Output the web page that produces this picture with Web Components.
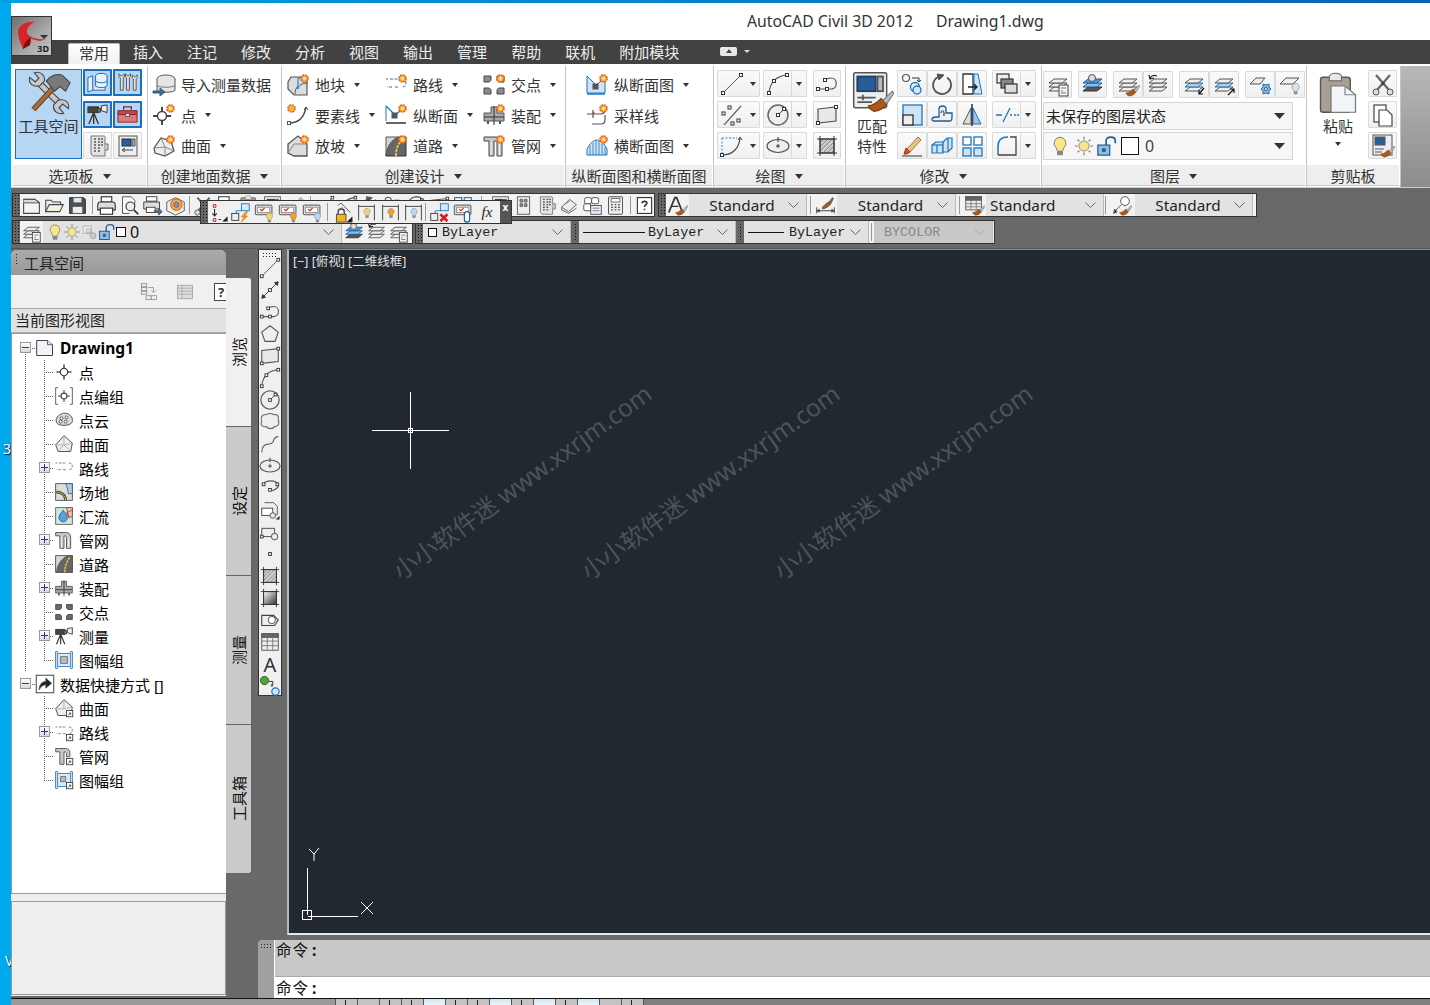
<!DOCTYPE html>
<html lang="zh-CN">
<head>
<meta charset="UTF-8">
<title>AutoCAD Civil 3D 2012</title>
<style>
  html, body { margin: 0; height: 100%; overflow: hidden; }
  html { background: #00a8ee; }
  body { background: linear-gradient(90deg, #009fe3, #0a62b4) top / 100% 3px no-repeat; font: 15px "Noto Sans", "Noto Sans CJK SC", sans-serif; color: #222; }
</style>
</head>
<body>
<cad-wall-label x="3" y="439">3</cad-wall-label>
<cad-wall-label x="5" y="951">V</cad-wall-label>
<cad-desktop>
  <cad-titlebar><span>AutoCAD Civil 3D 2012</span><span>Drawing1.dwg</span></cad-titlebar>
  <cad-tabs>
    <cad-tab active>常用</cad-tab><cad-tab>插入</cad-tab><cad-tab>注记</cad-tab><cad-tab>修改</cad-tab><cad-tab>分析</cad-tab><cad-tab>视图</cad-tab><cad-tab>输出</cad-tab><cad-tab>管理</cad-tab><cad-tab>帮助</cad-tab><cad-tab>联机</cad-tab><cad-tab>附加模块</cad-tab>
  </cad-tabs>
  <cad-ribbon>
    <cad-panel w="135" label="选项板" arrow pad="5px 0 0 2px">
      <cad-grid cols="67px 29px 29px" rows="28px 27px 27px" gap="4px 1px" ml="0">
        <cad-bigtool active icon="toolspace" size="44" style="grid-row:1/4">工具空间</cad-bigtool>
        <cad-tool active icon="dbmap" w="29" h="27"></cad-tool>
        <cad-tool active icon="wrenches" w="29" h="27"></cad-tool>
        <cad-tool active icon="survey" w="29" h="27"></cad-tool>
        <cad-tool active icon="toolbox" w="29" h="27"></cad-tool>
        <cad-tool icon="calc" w="29" h="27"></cad-tool>
        <cad-tool icon="panel" w="29" h="27"></cad-tool>
      </cad-grid>
    </cad-panel>
    <cad-panel w="134" label="创建地面数据" arrow pad="5px 0 0 5px">
      <cad-grid cols="1fr" rows="31px 30px 31px" gap="0">
        <cad-action icon="import">导入测量数据</cad-action>
        <cad-action icon="pointadd" arrow>点</cad-action>
        <cad-action icon="surfaceadd" arrow>曲面</cad-action>
      </cad-grid>
    </cad-panel>
    <cad-panel w="284" label="创建设计" arrow pad="5px 0 0 5px">
      <cad-grid cols="98px 98px 82px" rows="31px 30px 31px" gap="0">
        <cad-action icon="parcel" arrow>地块</cad-action>
        <cad-action icon="alignment" arrow>路线</cad-action>
        <cad-action icon="intersection" arrow>交点</cad-action>
        <cad-action icon="feature" arrow>要素线</cad-action>
        <cad-action icon="profile" arrow>纵断面</cad-action>
        <cad-action icon="assembly" arrow>装配</cad-action>
        <cad-action icon="grading" arrow>放坡</cad-action>
        <cad-action icon="corridor" arrow>道路</cad-action>
        <cad-action icon="pipe" arrow>管网</cad-action>
      </cad-grid>
    </cad-panel>
    <cad-panel w="148" label="纵断面图和横断面图" pad="5px 0 0 20px">
      <cad-grid cols="1fr" rows="31px 30px 31px" gap="0">
        <cad-action icon="profileview" arrow>纵断面图</cad-action>
        <cad-action icon="sample">采样线</cad-action>
        <cad-action icon="sectionview" arrow>横断面图</cad-action>
      </cad-grid>
    </cad-panel>
    <cad-panel w="132" label="绘图" arrow pad="6px 0 0 3px">
      <cad-grid cols="43px 44px 28px" rows="27px 27px 27px" gap="4px 3px">
        <cad-tool icon="line" w="43" h="27" drop="inline"></cad-tool>
        <cad-tool icon="arc" w="44" h="27" drop="split"></cad-tool>
        <cad-tool icon="poly" w="28" h="27" ml="3"></cad-tool>
        <cad-tool icon="points" w="43" h="27" drop="inline"></cad-tool>
        <cad-tool icon="circle" w="44" h="27" drop="split"></cad-tool>
        <cad-tool icon="rect" w="28" h="27" ml="3"></cad-tool>
        <cad-tool icon="dotcurve" w="43" h="27" drop="inline"></cad-tool>
        <cad-tool icon="ellipse" w="44" h="27" drop="split"></cad-tool>
        <cad-tool icon="hatch" w="28" h="27" ml="3"></cad-tool>
      </cad-grid>
    </cad-panel>
    <cad-panel w="196" label="修改" arrow pad="5px 0 0 4px">
      <cad-bigtool plain icon="match" size="44" style="width:44px;height:90px;margin-right:3px">匹配<br>特性</cad-bigtool>
      <cad-grid cols="30px 30px 30px 44px" rows="27px 27px 27px" gap="4px 0" mt="1">
        <cad-tool icon="join" w="30" h="27"></cad-tool>
        <cad-tool icon="rotate" w="30" h="27"></cad-tool>
        <cad-tool icon="stretch" w="30" h="27"></cad-tool>
        <cad-tool icon="overlap" w="44" h="27" drop="split" ml="5"></cad-tool>
        <cad-tool icon="scale" w="30" h="27"></cad-tool>
        <cad-tool icon="offset" w="30" h="27"></cad-tool>
        <cad-tool icon="mirror" w="30" h="27"></cad-tool>
        <cad-tool icon="breakline" w="44" h="27" drop="split" ml="5"></cad-tool>
        <cad-tool icon="erase" w="30" h="27"></cad-tool>
        <cad-tool icon="array3d" w="30" h="27"></cad-tool>
        <cad-tool icon="grid4" w="30" h="27"></cad-tool>
        <cad-tool icon="fillet" w="44" h="27" drop="split" ml="5"></cad-tool>
      </cad-grid>
    </cad-panel>
    <cad-panel w="265" label="图层" arrow pad="7px 0 0 1px" column>
      <cad-row gap="6" h="28">
        <cad-tool icon="layerprops" w="29" h="27"></cad-tool>
        <cad-tool icon="layeriso" w="29" h="27"></cad-tool>
        <cad-row><cad-tool icon="layermatch" w="30" h="27"></cad-tool><cad-tool icon="layerprev" w="30" h="27"></cad-tool></cad-row>
        <cad-row><cad-tool icon="layerdown" w="30" h="27"></cad-tool><cad-tool icon="layerup" w="30" h="27"></cad-tool></cad-row>
        <cad-row><cad-tool icon="layerfreeze" w="30" h="27"></cad-tool><cad-tool icon="layerbulb" w="30" h="27"></cad-tool></cad-row>
      </cad-row>
      <cad-combo w="250" h="28" mode="ribbon" mt="3"><span style="padding:0 0 2px 2px">未保存的图层状态</span></cad-combo>
      <cad-combo w="250" h="28" mode="ribbon" mt="2">
        <cad-icon name="bulbY" size="22" box="24" style="margin-left:4px"></cad-icon>
        <cad-icon name="sun" size="22" box="24"></cad-icon>
        <cad-icon name="lockopen" size="22" box="22"></cad-icon>
        <cad-swatch size="18" style="margin:0 6px 0 3px"></cad-swatch><span style="font-size:16px;color:#444">0</span>
      </cad-combo>
    </cad-panel>
    <cad-panel w="94" label="剪贴板" pad="5px 0 0 6px">
      <cad-bigtool plain icon="paste" size="42" style="width:50px;height:90px;margin-right:5px">粘贴<cad-caret></cad-caret></cad-bigtool>
      <cad-grid cols="29px" rows="27px 27px 27px" gap="4px" mt="1">
        <cad-tool icon="cut" w="29" h="27"></cad-tool>
        <cad-tool icon="copy" w="29" h="27"></cad-tool>
        <cad-tool icon="matchsmall" w="29" h="27"></cad-tool>
      </cad-grid>
    </cad-panel>
  </cad-ribbon>

  <cad-toolbars>
    <cad-row gap="3">
      <cad-toolbar w="643">
        <cad-icon name="new" box="23"></cad-icon><cad-icon name="open" box="23"></cad-icon><cad-icon name="save" box="23"></cad-icon><cad-sep></cad-sep>
        <cad-icon name="print" box="23"></cad-icon><cad-icon name="preview" box="23"></cad-icon><cad-icon name="plot" box="23"></cad-icon><cad-icon name="publish" box="23"></cad-icon><cad-sep w="5"></cad-sep>
        <cad-icon name="cut" box="23"></cad-icon><cad-icon name="copy" box="23"></cad-icon><cad-icon name="paste" box="23"></cad-icon><cad-icon name="panel" box="23"></cad-icon><cad-icon name="erase" box="23"></cad-icon><cad-sep></cad-sep>
        <cad-icon name="line" box="23"></cad-icon><cad-icon name="arc" box="23"></cad-icon><cad-icon name="rotate" box="23"></cad-icon><cad-icon name="join" box="23"></cad-icon><cad-icon name="circle" box="23"></cad-icon><cad-icon name="rect" box="23"></cad-icon><cad-icon name="grid4" box="23"></cad-icon><cad-sep w="15"></cad-sep>
        <cad-icon name="panel" box="23"></cad-icon><cad-icon name="palette" box="23"></cad-icon><cad-icon name="calc" box="23"></cad-icon><cad-icon name="stack" box="23"></cad-icon><cad-icon name="blocks" box="23"></cad-icon><cad-icon name="calc2" box="23"></cad-icon><cad-sep w="7"></cad-sep>
        <cad-icon name="help" box="21" size="19"></cad-icon>
      </cad-toolbar>
      <cad-toolbar w="599">
        <cad-icon name="textstyle" box="23"></cad-icon>
        <cad-combo w="118" h="22" center>Standard</cad-combo><cad-sep w="7"></cad-sep>
        <cad-icon name="dimstyle" box="23"></cad-icon>
        <cad-combo w="119" h="22" center>Standard</cad-combo><cad-sep w="7"></cad-sep>
        <cad-icon name="tablestyle" box="23"></cad-icon>
        <cad-combo w="118" h="22"><span style="padding-left:4px">Standard</span></cad-combo><cad-sep w="3"></cad-sep>
        <cad-icon name="mleader" box="28" size="21"></cad-icon>
        <cad-combo w="118" h="22" center>Standard</cad-combo>
      </cad-toolbar>
    </cad-row>
    <cad-row gap="2">
      <cad-toolbar w="401">
        <cad-icon name="layerprops" box="23"></cad-icon>
        <cad-combo w="299" h="22">
          <cad-icon name="bulbY" size="18" box="16" style="margin-left:4px"></cad-icon><cad-icon name="sun" size="18" box="18"></cad-icon><cad-icon name="plotoff" size="18" box="18"></cad-icon><cad-icon name="lockopen" size="18" box="16"></cad-icon>
          <cad-swatch size="10" style="margin:0 4px 0 1px"></cad-swatch><span style="color:#111;font-size:16px">0</span>
        </cad-combo>
        <cad-icon name="layeriso" box="22" size="21" style="margin-left:1px"></cad-icon><cad-icon name="layerprev" box="22" size="21"></cad-icon><cad-icon name="layerprops" box="22" size="21"></cad-icon>
      </cad-toolbar>
      <cad-toolbar w="580">
        <cad-combo w="148" h="22" mono><cad-swatch size="9" style="margin:0 5px 0 5px"></cad-swatch>ByLayer</cad-combo><cad-sep grip></cad-sep>
        <cad-combo w="157" h="22" mono><cad-rule w="62"></cad-rule><span style="margin-left:3px">ByLayer</span></cad-combo><cad-sep grip></cad-sep>
        <cad-combo w="125" h="22" mono><cad-rule w="36"></cad-rule><span style="margin-left:5px">ByLayer</span></cad-combo><cad-sep w="5"></cad-sep>
        <cad-combo w="119" h="22" mono disabled><span style="padding-left:10px">BYCOLOR</span></cad-combo>
      </cad-toolbar>
    </cad-row>
  </cad-toolbars>

  <cad-workspace>
    <cad-palette slot="palette">
      <cad-tree-item level="0" icon="doc" open bold>Drawing1</cad-tree-item>
      <cad-tree-item level="1" icon="target" trunk>点</cad-tree-item>
      <cad-tree-item level="1" icon="targetgroup" trunk>点编组</cad-tree-item>
      <cad-tree-item level="1" icon="cloud" trunk>点云</cad-tree-item>
      <cad-tree-item level="1" icon="surface" trunk>曲面</cad-tree-item>
      <cad-tree-item level="1" icon="alignTree" trunk plus>路线</cad-tree-item>
      <cad-tree-item level="1" icon="siteTree" trunk>场地</cad-tree-item>
      <cad-tree-item level="1" icon="catch" trunk>汇流</cad-tree-item>
      <cad-tree-item level="1" icon="pipeTree" trunk plus>管网</cad-tree-item>
      <cad-tree-item level="1" icon="road" trunk>道路</cad-tree-item>
      <cad-tree-item level="1" icon="assemblyTree" trunk plus>装配</cad-tree-item>
      <cad-tree-item level="1" icon="cross" trunk>交点</cad-tree-item>
      <cad-tree-item level="1" icon="survey" trunk plus>测量</cad-tree-item>
      <cad-tree-item level="1" icon="sheet" trunk last>图幅组</cad-tree-item>
      <cad-tree-item level="0" icon="shortcut" open>数据快捷方式 []</cad-tree-item>
      <cad-tree-item level="1" icon="surfaceS">曲面</cad-tree-item>
      <cad-tree-item level="1" icon="alignS" plus>路线</cad-tree-item>
      <cad-tree-item level="1" icon="pipeS">管网</cad-tree-item>
      <cad-tree-item level="1" icon="sheetS" last>图幅组</cad-tree-item>
    </cad-palette>
    <cad-sidetabs slot="palette">
      <cad-sidetab active>浏览</cad-sidetab><cad-sidetab>设定</cad-sidetab><cad-sidetab>测量</cad-sidetab><cad-sidetab last>工具箱</cad-sidetab>
    </cad-sidetabs>
    <cad-drawbar slot="drawbar">
      <cad-icon name="line" box="22"></cad-icon><cad-icon name="xline" box="22"></cad-icon><cad-icon name="poly" box="22"></cad-icon><cad-icon name="pentagon" box="22"></cad-icon><cad-icon name="rect" box="22"></cad-icon><cad-icon name="arc" box="22"></cad-icon><cad-icon name="circle" box="22"></cad-icon><cad-icon name="revcloud" box="22"></cad-icon><cad-icon name="spline" box="22"></cad-icon><cad-icon name="ellipse" box="22"></cad-icon><cad-icon name="earc" box="22"></cad-icon><cad-icon name="insert" box="22"></cad-icon><cad-icon name="block" box="22"></cad-icon><cad-icon name="dot" box="22"></cad-icon><cad-icon name="hatch" box="22"></cad-icon><cad-icon name="gradient" box="22"></cad-icon><cad-icon name="region" box="22"></cad-icon><cad-icon name="table" box="22"></cad-icon><cad-text-icon>A</cad-text-icon><cad-icon name="addsel" box="22"></cad-icon>
    </cad-drawbar>
    <cad-viewport slot="viewport" label="[−] [俯视] [二维线框]">
      <cad-watermark x="115" y="307">小小软件迷 www.xxrjm.com</cad-watermark>
      <cad-watermark x="303" y="307">小小软件迷 www.xxrjm.com</cad-watermark>
      <cad-watermark x="496" y="307">小小软件迷 www.xxrjm.com</cad-watermark>
    </cad-viewport>
    <cad-command slot="command"></cad-command>
  </cad-workspace>
  <cad-statusbar></cad-statusbar>
</cad-desktop>

<script>
  // small svg bits reused by the icons
  const n = (x, y, c = '#333') => `<rect x="${x - 1.5}" y="${y - 1.5}" width="3" height="3" fill="#fff" stroke="${c}"/>`;
  const star = `<circle cx="18.5" cy="5.5" r="3.6" fill="#fbb03b" stroke="#e8581c" stroke-width="1.4" stroke-dasharray="2 .8"/><circle cx="18.5" cy="5.5" r="1.2" fill="#fff2c8" stroke="none"/>`;
  const brush = (x = 0, y = 0) => `<g transform="translate(${x} ${y})"><path d="M12 22c-2-1-3-2-3-3 3 0 5-2 7-4l3 3c-1 2-4 4-7 4z" fill="#a9591b" stroke="#7a3e10" stroke-width=".6"/><path d="M17 16l5-5 1 1-4 6z" fill="#bbb" stroke="#777" stroke-width=".6"/></g>`;
  const bulb = (f, s = '#777') => `<path d="M12 2.5a6.5 6.5 0 0 0-4.5 11.2c1 1 1.5 2.3 1.5 4h6c0-1.7.5-3 1.5-4A6.5 6.5 0 0 0 12 2.5z" fill="${f}" stroke="${s}"/><path d="M9.5 18.5h5v3h-5z" fill="#999" stroke="#666"/>`;
  const smallbulb = (f, x = 15, y = 12) => `<g transform="translate(${x} ${y}) scale(.55)">${bulb(f)}</g>`;
  const sheetcheck = `<rect x="1.5" y="3.5" width="19" height="11" rx="1" fill="#ddd" stroke="#444"/><rect x="4" y="6" width="14" height="6" fill="#fff" stroke="#888"/><path d="M7 8l2 2 3-3" stroke="#c00" stroke-width="1.2"/>`;
  const layers = (c = '#ddd', s = '#555') => `<path d="M3 18l5-4h13l-5 4z" fill="${c}" stroke="${s}"/><path d="M3 14l5-4h13l-5 4z" fill="${c}" stroke="${s}"/><path d="M3 10l5-4h13l-5 4z" fill="${c}" stroke="${s}"/>`;
  const layersBlue = `<path d="M3 18l5-4h13l-5 4z" fill="#eee" stroke="#555"/><path d="M3 14l5-4h13l-5 4z" fill="#a8cdee" stroke="#1c75bc"/><path d="M3 10l5-4h13l-5 4z" fill="#eee" stroke="#555"/>`;
  const short = `<rect x="15" y="15" width="7.5" height="7.5" fill="#fff" stroke="#333"/><path d="M17 21l3-3m-2 0h2v2" stroke="#333"/>`;
  const pipeShape = `<path d="M2 3h12c4 0 6 2 6 6v13h-5V9c0-1-1-2-2-2h-1v15H7V7H2z" fill="#c8c8c8" stroke="#444"/><path d="M9 8v13M17.500 10v11" stroke="#f4f4f4"/>`;
  const alignShape = `<path d="M2 6h2M6 6h8M18 6c3 0 4 2 4 4s-1 4-4 4M14 14h-3M8 14H3" stroke="#3a6d9e" stroke-dasharray="3 1.4"/>`;
  const quads = (f) => `<g fill="${f}" stroke="#444"><path d="M2 3h7v3c0 2-1 3-3 3H2z"/><path d="M22 3h-7v3c0 2 1 3 3 3h4z"/><path d="M2 21h7v-3c0-2-1-3-3-3H2z"/><path d="M22 21h-7v-3c0-2 1-3 3-3h4z"/></g>`;

  const ICONS = {
    toolspace: `<path d="M5 5l14 14" stroke="#444" stroke-width="3.6"/><path d="M5 5l14 14" stroke="#c8c8c8" stroke-width="2.4"/><g fill="#c8c8c8" stroke="#444" stroke-width=".6"><path d="M1.500 3.500L4.500 6l2-2L4 1c3-1 6 1 5.500 4.500L7 8C3.500 9 0.500 7 1.500 3.500z"/><path d="M22.500 20.500L19.500 18l-2 2L20 23c-3 1-6-1-5.500-4.500L17 16c3.500-1 6.500 1 5.500 4.500z"/></g><path d="M3.500 21L15 8.500" stroke="#5c3a20" stroke-width="3"/><path d="M3.500 21L15 8.500" stroke="#a86a3a" stroke-width="2"/><path d="M10.500 5.500c2-3 6-4.500 9-3l4 4-2.500 4.500-3-2.500-3 2.500z" fill="#7a7a7a" stroke="#444" stroke-width=".6"/>`,
    dbmap: `<path d="M2 7l5-2v15l-5 2zM7 20h13V8" fill="#e4eff9" stroke="#2266a8"/><ellipse cx="16" cy="5" rx="6" ry="2.500" fill="#e8f2fb" stroke="#1c65a8"/><path d="M10 5v10c0 3 12 3 12 0V5M10 10c0 3 12 3 12 0" stroke="#1c65a8" fill="#e8f2fb"/>`,
    wrenches: `<g fill="#e3e3e3" stroke="#555"><path d="M3 3v3l1.500 1v13h3V7L9 6V3L7 5H5z"/><path d="M10 3v3l1 1v13h3V7l1-1V3l-2 2h-1z"/><path d="M17 4v3l1 1v12h3V8l1-1V4l-2 2h-1z"/></g>`,
    survey: `<g stroke="#333"><rect x="2" y="4" width="11" height="6" fill="#444"/><rect x="12" y="5.500" width="3" height="4" fill="#777"/><path d="M16 3l6-1v8l-6-2z" fill="#eee"/><path d="M8 10L3 22M8 10v12M8 10l5 12" stroke-width="1.400"/></g>`,
    toolbox: `<path d="M8 7V4h8v3" stroke="#7a2c2c" stroke-width="1.400"/><path d="M2 8h20v4H2z" fill="#c7444a" stroke="#7a2c2c"/><path d="M2 12h20v8H2z" fill="#e2777a" stroke="#7a2c2c"/><rect x="10" y="11" width="4" height="3" fill="#eee" stroke="#555"/>`,
    calc: `<path d="M5 2h13c1 0 1 1 1 1v19H7l-2-2z" fill="#e3e3e3" stroke="#777"/><path d="M8 5h2M12 5h2M15 5h2M8 8h2M12 8h2M15 8h2M8 11h2M12 11h2M15 11h2M8 14h2M12 14h2M8 17h2M12 17h2" stroke="#555" stroke-width="1.500"/><path d="M19 10h3v6h-3" fill="#ccc" stroke="#777"/>`,
    panel: `<rect x="3" y="2" width="18" height="20" fill="#eee" stroke="#555"/><rect x="6" y="5" width="9" height="7" fill="#2a5d96" stroke="#234"/><path d="M16 5h3v7h-3z" fill="#aaa"/><path d="M7 16h10" stroke="#444"/><path d="M9 14l-3 2 3 2" stroke="#444"/>`,
    import: `<ellipse cx="14" cy="6" rx="9" ry="4" fill="#e8e8e8" stroke="#555"/><path d="M5 6v11c0 3 18 3 18 0V6" fill="#e6e6e6" stroke="#555"/><path d="M5 12c0 3 18 3 18 0" stroke="#777"/><path d="M1 18h7v-3l5 4-5 4v-3H1z" fill="#1c75bc"/>`,
    pointadd: `<circle cx="10" cy="13" r="4.500" stroke="#444" stroke-width="1.500"/><path d="M10 4v5M10 17v5M1 13h5M14 13h5" stroke="#444" stroke-width="2"/>${star}`,
    surfaceadd: `<path d="M2 14L9 4l10 3 3 10-9 5-10-3z" fill="#eee" stroke="#555" stroke-width="1.300"/><path d="M2 14l11-1 9 4M13 13l-4-9M13 13v9" stroke="#888"/>${star}`,
    parcel: `<path d="M2 9l3-5h16v18H8l-6-6z" fill="#ddd" stroke="#555" stroke-width="1.200"/><path d="M9 21c0-7 4-11 12-11" stroke="#555" fill="none"/><path d="M12 5h9v5c-5 0-8 2-9 6z" fill="#cfe0ef" stroke="#2a6aa8"/>${star}`,
    alignment: `${alignShape}${star}`,
    feature: `<path d="M3 20c10 0 15-5 17-16" stroke="#444" stroke-width="1.400"/>${n(3, 20, '#555')}<path d="M20 4l-2 3M20 4l2 3" stroke="#444"/><circle cx="5.500" cy="5.500" r="3.600" fill="#fbb03b" stroke="#e8581c" stroke-width="1.400" stroke-dasharray="2 .8"/>`,
    profile: `<path d="M2 3l9 9 9-7" stroke="#1c75bc" stroke-width="1.300"/><path d="M2 20h20" stroke="#333" stroke-width="1.500"/><rect x="8" y="10" width="5" height="5" fill="#555"/><path d="M2 3v15" stroke="#1c75bc"/>${star}`,
    grading: `<path d="M2 10L12 2l9 8v12H8l-6-3z" fill="#ddd" stroke="#555" stroke-width="1.300"/><path d="M2 19l6-9h13" stroke="#888"/>${star}`,
    corridor: `<path d="M2 22C3 10 8 4 16 3l6 0v19z" fill="#666" stroke="#333"/><path d="M2 22V3h13C8 5 3 12 2 22z" fill="#cfd8c8" stroke="#555"/><path d="M12 22c0-6 1-11 6-16" stroke="#f8d12e" stroke-width="1.800" stroke-dasharray="3 1"/>${star}`,
    intersection: `${quads('#8c8c8c')}${star}`,
    assembly: `<path d="M9 4h6v6h7v8H2v-8h7z" fill="#aaa" stroke="#555"/><path d="M12 3v19M2 14h20" stroke="#333"/><path d="M6 18v3M18 18v3" stroke="#555" stroke-width="2"/>${star}`,
    pipe: `${pipeShape}${star}`,
    profileview: `<path d="M2 20V3l9 9 9-7v15z" fill="#cfe4f6" stroke="#1c75bc"/><rect x="8" y="11" width="5" height="5" fill="#555"/><path d="M2 21h18" stroke="#1c75bc" stroke-width="1.500"/>${star}`,
    sample: `<path d="M2 11h6M8 7v8M8 11h7c4 0 5-2 5-4M20 12v5c0 3-2 4-4 4H7" stroke="#555" stroke-width="1.200"/><path d="M7 10h3" stroke="#c33"/>${star}`,
    sectionview: `<path d="M2 21v-6c3-6 7-9 10-9s7 3 10 9v6z" fill="#d4e5f4" stroke="#1c75bc"/><path d="M5 21V12M8 21V9M11 21V7M14 21V7M17 21V10M20 21V13" stroke="#1c75bc" stroke-width=".8"/>${star}`,
    line: `<path d="M3 21L21 3" stroke="#555"/>${n(3, 21)}${n(21, 3)}`,
    xline: `<path d="M5 19L19 5M3 21l4-1-3-3zM21 3l-4 1 3 3z" stroke="#333" fill="#333"/>${n(12, 12)}`,
    arc: `<path d="M3 21c1-10 7-17 18-18" stroke="#555" stroke-width="1.200"/>${n(3, 21)}${n(8, 9)}${n(21, 3)}`,
    poly: `<path d="M3 17h13c7 0 7-11 0-11-4 0-6 2-6 2" stroke="#555" stroke-width="1.200"/>${n(3, 17)}${n(12, 17)}${n(10, 8)}`,
    points: `<path d="M4 22L21 3" stroke="#666" stroke-width="1.200"/><g fill="#fff" stroke="#333"><rect x="2" y="9" width="3" height="3"/><rect x="8" y="3" width="3" height="3"/><rect x="17" y="16" width="3" height="3"/><rect x="11" y="19" width="3" height="3"/></g>`,
    circle: `<circle cx="12" cy="12" r="10" fill="#eee" stroke="#666" stroke-width="1.500"/><path d="M12 12l6-6" stroke="#444"/>${n(12, 12)}${n(18, 6)}`,
    rect: `<path d="M3 6l18-2v14L3 20z" fill="#e8e8e8" stroke="#555" stroke-width="1.200"/>${n(3, 20)}${n(21, 4)}`,
    dotcurve: `<path d="M2 4h15" stroke="#2a8ad8" stroke-dasharray="2 1.500"/><path d="M2 4v17" stroke="#2a8ad8" stroke-dasharray="2 1.500"/><path d="M2 21c11 0 17-7 18-17" stroke="#444" stroke-width="1.200"/><path d="M20 3l-2 3M20 3l2 3" stroke="#444"/>${n(2, 21)}`,
    ellipse: `<ellipse cx="12" cy="12" rx="11" ry="6.500" fill="#eee" stroke="#555" stroke-width="1.200"/><path d="M12 10v4M10 12h4M12 3v5" stroke="#333"/>`,
    earc: `<path d="M4 8c4-5 14-5 17 0 1 3-3 6-7 7" stroke="#555" stroke-width="1.200"/>${n(5, 8)}${n(12, 14)}${n(20, 8)}`,
    hatch: `<rect x="5" y="5" width="14" height="14" fill="#ccc" stroke="#333"/><path d="M5 9l4-4M5 13l8-8M5 17l12-12M8 19l11-11M12 19l7-7M16 19l3-3" stroke="#777" stroke-width=".8"/><path d="M2 5h20M2 19h20M5 2v20M19 2v20" stroke="#333"/>`,
    gradient: `<defs><linearGradient id="g1" x2="1" y2="1"><stop offset="0" stop-color="#fff"/><stop offset="1" stop-color="#333"/></linearGradient></defs><rect x="5" y="5" width="14" height="14" fill="url(#g1)" stroke="#333"/><path d="M2 5h20M2 19h20M5 2v20M19 2v20" stroke="#333"/>`,
    region: `<path d="M3 7h13l5 5-4 6H3z" fill="#eee" stroke="#444" stroke-width="1.200"/><circle cx="14" cy="12" r="4" fill="#fff" stroke="#444"/>`,
    pentagon: `<path d="M12 3l9 7-3.500 10h-11L3 10z" fill="#eee" stroke="#555" stroke-width="1.200"/>`,
    revcloud: `<path d="M8 4c3-2 5-2 8 0 4-1 6 2 5 6 2 3 0 7-4 7-2 3-7 3-9 0-5 1-7-3-5-6C1 7 4 3 8 4z" fill="#eee" stroke="#666" stroke-width="1.200"/>`,
    spline: `<path d="M3 21c0-8 5-9 8-9s4-1 5-4 3-4 5-4" stroke="#555" stroke-width="1.200"/>`,
    insert: `<path d="M6 4h10l4 4v9H4" fill="#eee" stroke="#555"/><rect x="3" y="10" width="12" height="8" fill="#fff" stroke="#444"/><circle cx="15" cy="18" r="3" fill="#eee" stroke="#444"/><path d="M19 22l3-3v3z" fill="#111"/>`,
    block: `<path d="M3 8h14v9H3z" fill="#eee" stroke="#444"/>${n(3, 17)}<circle cx="17" cy="17" r="3.500" fill="#eee" stroke="#444"/>`,
    dot: `<rect x="10.500" y="10.500" width="3" height="3" fill="#fff" stroke="#222"/>`,
    table: `<rect x="3" y="3" width="18" height="18" fill="#eee" stroke="#555"/><path d="M3 3h18v4H3z" fill="#666"/><path d="M3 11h18M3 16h18M9 7v14M15 7v14" stroke="#777"/>`,
    addsel: `<circle cx="6" cy="6" r="4.500" fill="#5a9e3a" stroke="#2c6a1e"/><circle cx="18" cy="18" r="4" fill="#cfe6fa" stroke="#1c75bc" stroke-width="1.300"/><path d="M11 7h4v4M13 10l2 2-2 0" stroke="#222"/>`,
    match: `<rect x="2" y="1" width="18" height="19" rx="1" fill="#eceff2" stroke="#555" stroke-width=".8"/><rect x="4" y="3" width="10" height="8" fill="#2a5d96" stroke="#1e3f68"/><rect x="15" y="3" width="3" height="8" fill="#bbb"/><path d="M4 14.500h10M4 17h8M7 13v3" stroke="#555"/>${brush(1, 0)}`,
    join: `<circle cx="6" cy="6" r="3.500" stroke="#555" stroke-width="1.200"/><circle cx="15" cy="15" r="4.500" stroke="#1c75bc" stroke-width="1.300"/><circle cx="17" cy="18" r="4" fill="#d4e6f7" stroke="#1c75bc" stroke-width="1.300"/><path d="M12 6h7v4M17 8l2 2 2-2" stroke="#333"/>`,
    rotate: `<path d="M8 5a9 9 0 1 0 9 .5" stroke="#555" stroke-width="1.800"/><path d="M7 2l7 1-5 5z" fill="#555"/>`,
    stretch: `<path d="M3 2h10v20H3z" fill="#fff" stroke="#333" stroke-width="1.300"/><path d="M14 2h4l4 20h-8z" fill="#cde3f6" stroke="#1c75bc"/><path d="M8 15h9M14 12l3 3-3 3" stroke="#222" stroke-width="1.300"/>`,
    overlap: `<rect x="2" y="2" width="12" height="9" fill="#eee" stroke="#333" stroke-width="1.200"/><rect x="6" y="7" width="12" height="9" fill="#888" stroke="#333" stroke-width="1.200"/><rect x="10" y="12" width="12" height="9" fill="#ddd" stroke="#333" stroke-width="1.200"/>`,
    scale: `<rect x="3" y="2" width="19" height="20" fill="#cfe4f6" stroke="#1c75bc" stroke-width="1.300"/><rect x="3" y="12" width="10" height="10" fill="#eee" stroke="#333" stroke-width="1.300"/>`,
    offset: `<path d="M6 14h3V6c0-4 7-4 7 0v4h6v4c0 2 0 4-2 4H4c-3 0-3-4 2-4z" fill="#eee" stroke="#1c5d98" stroke-width="1.300"/><path d="M11 10c0-3 3-3 3 0v3" stroke="#222"/>`,
    mirror: `<path d="M11 5L3 21h8z" fill="#ddd" stroke="#555"/><path d="M13 5l8 16h-8z" fill="#9cc6ea" stroke="#1c75bc"/><path d="M12 1v22" stroke="#222" stroke-width="1.400"/>`,
    breakline: `<path d="M1 12h6M8 19l7-14" stroke="#1c75bc" stroke-width="1.300"/><path d="M15 12h2M19 12h2M22 12h2" stroke="#1c75bc" stroke-width="1.300"/>`,
    erase: `<path d="M7 15L18 3l3 3-11 12z" fill="#e8c48a" stroke="#a07a40"/><path d="M6 14l4 4-3 2H4z" fill="#d8542a" stroke="#a0301a"/><path d="M2 22h20" stroke="#333"/>`,
    array3d: `<g fill="#cfe4f6" stroke="#1c75bc" stroke-width="1.200"><path d="M2 11l4-3h7v11H2z"/><path d="M13 8l4-4h5v10l-4 4h-5z"/><path d="M2 11h11"/><path d="M7 11v8"/><path d="M18 4v14"/></g>`,
    grid4: `<g fill="#cfe4f6" stroke="#1c75bc" stroke-width="1.300"><rect x="3" y="3" width="8" height="8" fill="#fff"/><rect x="14" y="3" width="8" height="8" fill="#fff"/><rect x="3" y="14" width="8" height="8"/><rect x="14" y="14" width="8" height="8"/></g>`,
    fillet: `<path d="M3 21V12C3 6 7 3 13 3" stroke="#1c75bc" stroke-width="1.500"/><path d="M15 3h6v18H3" stroke="#444" stroke-width="1.300"/>`,
    layerprops: `${layers('#eee')}<rect x="13" y="12" width="9" height="11" fill="#f4f4f4" stroke="#444"/><path d="M15 15h5M15 18h2M15 20h5" stroke="#777"/>`,
    layeriso: `<path d="M2 18l5-4h14l-5 4z" fill="#555" stroke="#333"/><path d="M2 14l5-4h14l-5 4z" fill="#8cbde8" stroke="#1c5d98"/><path d="M2 10l5-4h14l-5 4z" fill="#4c9ade" stroke="#1c5d98"/><circle cx="11" cy="5" r="3.500" fill="#ddd" stroke="#555"/>`,
    layermatch: `${layers('#eee')}${brush(1, 1)}`,
    layerprev: `${layers('#eee')}<path d="M4 5c2-3 5-3 7-2M3 2l1 4 4-1" stroke="#222" stroke-width="1.200"/>`,
    layerdown: `${layersBlue}<path d="M22 15l-5 6M17 17v4h4" stroke="#111" stroke-width="1.200"/>`,
    layerup: `${layersBlue}<path d="M16 22l6-6M18 16h4v4" stroke="#111" stroke-width="1.200"/>`,
    layerfreeze: `<path d="M2 11L8 5h9l-5 6z" fill="#eee" stroke="#555"/><path d="M15 11l3 1 3-1 0 3 2 2-2 2v3l-3-1-3 1v-3l-2-2 2-2z" fill="#7cb7ec" stroke="#1c75bc"/><circle cx="18" cy="16" r="1.500" fill="#fff"/>`,
    layerbulb: `<path d="M2 11L8 5h13l-6 6z" fill="#eee" stroke="#555"/>${smallbulb('#cfe4f6', 11, 9)}`,
    bulbY: bulb('#fbe58a'),
    sun: `<circle cx="12" cy="12" r="5.500" fill="#fbe58a" stroke="#888"/><path d="M12 2v3M12 19v3M2 12h3M19 12h3M5 5l2 2M17 17l2 2M19 5l-2 2M7 17l-2 2" stroke="#777" stroke-width="1.300"/>`,
    plotoff: `<rect x="3" y="4" width="11" height="10" fill="#eee" stroke="#aaa"/><rect x="7" y="8" width="6" height="5" fill="#ddd" stroke="#aaa"/><circle cx="16" cy="17" r="4" fill="#ccc" stroke="#999"/>`,
    lockopen: `<rect x="2" y="11" width="13" height="11" fill="#8cbfe8" stroke="#1c5d98" stroke-width="1.300"/><path d="M7 15h3v3H7z" fill="#1c5d98"/><path d="M11 11V6c0-5 10-5 10 0v3" stroke="#1c5d98" stroke-width="1.800"/>`,
    paste: `<rect x="2" y="3" width="17" height="20" rx="1.500" fill="#a79e94" stroke="#5c554c" stroke-width=".8"/><path d="M7 3c0-3 7-3 7 0v2H7z" fill="#e8e8e8" stroke="#666" stroke-width=".6"/><path d="M8 8h8l6 5v10H8z" fill="#f2f5f8" stroke="#777" stroke-width=".7"/><path d="M16 8v5h6" stroke="#888" stroke-width=".7"/>`,
    cut: `<path d="M5 3l13 15M19 3L6 18" stroke="#666" stroke-width="2.200"/><circle cx="5" cy="20" r="3" fill="#ddd" stroke="#555"/><circle cx="19" cy="20" r="3" fill="#ddd" stroke="#555"/><circle cx="12" cy="11.500" r="1.500" fill="#333"/>`,
    copy: `<rect x="3" y="2" width="12" height="17" fill="#fff" stroke="#444" stroke-width="1.200"/><path d="M8 7h8l5 5v11H8z" fill="#fff" stroke="#444" stroke-width="1.200"/>`,
    matchsmall: `<rect x="2" y="1" width="19" height="20" fill="#eee" stroke="#555"/><rect x="4" y="3" width="10" height="8" fill="#2a5d96"/><path d="M4 15h9M4 18h7" stroke="#555"/>${brush(1, 1)}`,
    new: `<path d="M3 5h13l5 4v12H3z" fill="#f2f5f8" stroke="#444" stroke-width="1.200"/><path d="M3 5h13l5 4H3" fill="#d4dde6" stroke="#444"/>`,
    open: `<path d="M2 19V6h6l2 2h9v4" fill="#eee" stroke="#444" stroke-width="1.200"/><path d="M2 19l4-8h16l-4 8z" fill="#f6f0e0" stroke="#444" stroke-width="1.200"/>`,
    save: `<path d="M3 3h16l2 2v16H3z" fill="#46535f" stroke="#222"/><rect x="7" y="3" width="10" height="6" fill="#dfe6ec"/><rect x="6" y="13" width="12" height="8" fill="#eee"/>`,
    print: `<rect x="6" y="2" width="12" height="6" fill="#fff" stroke="#333" stroke-width="1.300"/><path d="M2 12c0-3 1-4 3-4h14c2 0 3 1 3 4v5H2z" fill="#ddd" stroke="#333" stroke-width="1.300"/><rect x="5" y="15" width="14" height="7" fill="#fff" stroke="#333" stroke-width="1.300"/>`,
    preview: `<path d="M4 2h10l4 4v6M4 2v19h8" fill="#fff" stroke="#444"/><circle cx="13" cy="13" r="5" fill="#e6f0f8" stroke="#333" stroke-width="1.300"/><path d="M17 17l5 5" stroke="#333" stroke-width="2"/>`,
    plot: `<rect x="5" y="2" width="12" height="5" fill="#fff" stroke="#333"/><path d="M2 8h18v8H2z" fill="#ddd" stroke="#333"/><rect x="5" y="14" width="10" height="6" fill="#fff" stroke="#333"/><path d="M14 18h5v-3l4 4-4 4v-3h-5z" fill="#1c75bc"/>`,
    publish: `<path d="M2 8l10-5 10 5v10l-10 5-10-5z" fill="#eee" stroke="#555"/><circle cx="13" cy="11" r="6.500" fill="#f0b040" stroke="#c04020"/><circle cx="13" cy="11" r="3" fill="#5aa0e0" stroke="#c04020"/>`,
    palette: `<rect x="5" y="2" width="14" height="20" fill="#eee" stroke="#555"/><path d="M8 5h3v3H8zM13 5h3v3h-3zM8 10h3v3H8zM13 10h3v3h-3z" fill="#999"/>`,
    palTree: `<g fill="#eee" stroke="#888"><rect x="2" y="1" width="7" height="4"/><rect x="2" y="6" width="7" height="4"/><rect x="2" y="11" width="7" height="4"/><rect x="8" y="17" width="7" height="5"/><rect x="15" y="17" width="7" height="5"/></g><path d="M11 6h7v6M15 10l3 3 3-3" stroke="#888"/>`,
    palList: `<rect x="2" y="3" width="20" height="18" fill="#ddd" stroke="#999"/><path d="M2 7h20M2 11h20M2 15h20M8 3v18" stroke="#aaa"/>`,
    stack: `<path d="M3 14l9-9 8 6-9 8z" fill="#eee" stroke="#555"/><path d="M3 14v3l8 4 9-6" stroke="#555"/><path d="M6 11l6-4" stroke="#777"/>`,
    blocks: `<rect x="3" y="3" width="8" height="7" rx="2" fill="#fff" stroke="#444"/><rect x="11" y="3" width="8" height="7" rx="2" fill="#fff" stroke="#444"/><rect x="2" y="10" width="8" height="8" rx="2" fill="#fff" stroke="#444"/><rect x="10" y="12" width="12" height="10" fill="#eef" stroke="#444"/><path d="M12 15h8M12 18h8" stroke="#777"/>`,
    calc2: `<rect x="4" y="2" width="16" height="20" rx="1" fill="#eee" stroke="#444"/><rect x="7" y="4" width="10" height="4" fill="#fff" stroke="#666"/><path d="M7 11h2M11 11h2M15 11h2M7 14h2M11 14h2M15 14h2M7 17h2M11 17h2M15 17h2" stroke="#555" stroke-width="1.500"/>`,
    help: `<rect x="3" y="2" width="18" height="20" fill="#fff" stroke="#333" stroke-width="1.400"/><path d="M9 9c0-3 6-3 6 0 0 2-3 2-3 5M12 16v2" stroke="#333" stroke-width="2"/>`,
    textstyle: `<path d="M2 20L9 3h2l6 15" stroke="#333" stroke-width="2"/><path d="M5 13h8" stroke="#333" stroke-width="1.500"/>${brush(1, 1)}`,
    dimstyle: `<path d="M2 14v7M22 14v7M2 18h20" stroke="#333"/><path d="M2 18l3-1.500v3zM22 18l-3-1.500v3z" fill="#333"/><path d="M8 15c2-3 5-6 8-7l4-5 1 1-3 6c-1 2-5 5-9 6z" fill="#a9591b"/>`,
    tablestyle: `<rect x="2" y="2" width="18" height="15" fill="#eee" stroke="#555"/><path d="M2 2h18v4H2z" fill="#666"/><path d="M2 10h18M2 13.500h18M8 6v11M14 6v11" stroke="#777"/>${brush(1, 1)}`,
    mleader: `<circle cx="16" cy="7" r="5" fill="#fff" stroke="#444"/><path d="M12 11L5 18l1 3" stroke="#444"/><path d="M4 16l3 3-4 2z" fill="#444"/>${brush(1, 1)}`,
    doc: `<path d="M2 3h13l6 5v13H2z" fill="#f0f3f7" stroke="#444" stroke-width="1.200"/><path d="M15 3v5h6" fill="#dde3ea" stroke="#444"/>`,
    target: `<circle cx="12" cy="12" r="4.500" stroke="#444" stroke-width="1.500"/><path d="M12 3v5M12 16v5M3 12h5M16 12h5" stroke="#555" stroke-width="2"/>`,
    targetgroup: `<path d="M5 2H2v20h3M19 2h3v20h-3" stroke="#444"/><circle cx="12" cy="12" r="3.500" stroke="#444" stroke-width="1.300"/><path d="M12 5v4M12 15v4M5 12h4M15 12h4" stroke="#555" stroke-width="1.500"/>`,
    cloud: `<path d="M7 6c3-3 10-3 13 1 3 3 3 9-1 10-4 2-10 2-14 0C1 15 2 8 7 6z" fill="#ddd" stroke="#555" stroke-width="1.200"/><g fill="#fff" stroke="#444"><circle cx="9" cy="10" r="1.800"/><circle cx="15" cy="9" r="1.800"/><circle cx="8" cy="14" r="1.800"/><circle cx="14" cy="14" r="1.800"/></g>`,
    surface: `<path d="M2 13L12 2l10 9-2 10H5z" fill="#eee" stroke="#555" stroke-width="1.200"/><path d="M12 2v11l-10 0M12 13l10-2M12 13l-7 8M12 13l8 8" stroke="#aaa"/>`,
    alignTree: alignShape,
    siteTree: `<rect x="2" y="2" width="20" height="20" fill="#ddd" stroke="#444"/><path d="M14 2h8v12h-5c0-4-1-7-3-12z" fill="#a8cdee"/><path d="M2 12c6 0 12 3 12 10" stroke="#555" stroke-width="3.500"/><path d="M2 12c6 0 12 3 12 10" stroke="#f8d12e" stroke-width="1" stroke-dasharray="2 1"/>`,
    catch: `<rect x="2" y="2" width="20" height="20" fill="#cfe8d8" stroke="#555"/><path d="M15 2h7v10l-4 2z" fill="#f4c9a0"/><path d="M15 8l7-3M15 8l3 6" stroke="#d03030"/><path d="M11 5c3 4 5 6 5 9a5 5 0 0 1-10 0c0-3 2-5 5-9z" fill="#5aa0e0" stroke="#1c5d98"/>`,
    pipeTree: pipeShape,
    road: `<rect x="2" y="2" width="20" height="20" fill="#d8d8c8" stroke="#444"/><path d="M3 22C4 12 9 6 16 2h6v20z" fill="#666"/><path d="M13 22c0-6 1-11 6-18" stroke="#f8d12e" stroke-width="1.600" stroke-dasharray="3 1"/>`,
    assemblyTree: `<path d="M9 4h6v6h7v8H2v-8h7z" fill="#aaa" stroke="#555"/><path d="M12 3v19M2 14h20" stroke="#333"/><path d="M6 18v3M18 18v3" stroke="#555" stroke-width="2"/>`,
    cross: quads('#6a6a6a'),
    sheet: `<path d="M5 2H2v20h3M19 2h3v20h-3" stroke="#1c5d98"/><rect x="4" y="4" width="16" height="16" fill="#d8e8f6" stroke="#1c75bc"/><rect x="8" y="8" width="8" height="8" fill="#bbb" stroke="#666"/>`,
    shortcut: `<rect x="1.500" y="1.500" width="21" height="21" fill="#fff" stroke="#444" stroke-width="1.200"/><path d="M5 19c0-7 4-10 8-10V5l7 6-7 6v-4c-3 0-6 2-8 6z" fill="#222"/>`,
    surfaceS: `<path d="M2 13L12 2l10 9-2 10H5z" fill="#eee" stroke="#555" stroke-width="1.200"/><path d="M12 2v11l-10 0M12 13l10-2" stroke="#aaa"/>${short}`,
    alignS: `${alignShape}${short}`,
    pipeS: `<path d="M2 3h12c3 0 5 2 5 5v5h-4V9c0-1-1-2-2-2h-1v15H7V7H2z" fill="#c8c8c8" stroke="#444"/>${short}`,
    sheetS: `<path d="M5 2H2v20h3M19 2h3v20h-3" stroke="#1c5d98"/><rect x="4" y="4" width="16" height="16" fill="#d8e8f6" stroke="#1c75bc"/><rect x="8" y="8" width="6" height="6" fill="#bbb" stroke="#666"/>${short}`,
    fdim: `<path d="M6 3h3v3H6z" fill="#fff" stroke="#c00"/><path d="M6 19h3v3H6z" fill="#fff" stroke="#c00"/><path d="M7.500 8v8M5 13l2.500 3 2.500-3" stroke="#222" stroke-width="1.200"/><path d="M12 20h3" stroke="#222"/><path d="M17 22l5-5v5z" fill="#111"/>`,
    fzap: `<rect x="13" y="2" width="9" height="8" fill="#d8e8f6" stroke="#1c75bc"/><rect x="2" y="13" width="8" height="8" fill="#eee" stroke="#333"/><path d="M13 10H7v3" stroke="#1c75bc"/><path d="M18 11l-5 6h3l-3 6 7-7h-3l3-5z" fill="#f59a20" stroke="#c56a00" stroke-width=".6"/>`,
    fbulbA: `${sheetcheck}${smallbulb('#f3d66a', 11, 11)}`,
    fbulbB: `${sheetcheck}${smallbulb('#f9a01a', 11, 11)}`,
    fbulbC: `${sheetcheck}${smallbulb('#b8d8f6', 11, 11)}`,
    flock: `<rect x="5" y="14" width="11" height="9" fill="#f4b41a" stroke="#444"/><path d="M7 14v-3c0-4 7-4 7 0v3" stroke="#444" stroke-width="1.500"/><path d="M7 4l3-3 11 11M12 6l-3 3" stroke="#444"/><path d="M17 23l6-6v6z" fill="#111"/>`,
    fdimA: `<path d="M3 3v18M21 3v18M3 5h18" stroke="#333"/>${smallbulb('#f3d66a', 6, 6)}`,
    fdimB: `<path d="M3 3v18M21 3v18M3 5h18" stroke="#333"/>${smallbulb('#f9a01a', 6, 6)}`,
    fdimC: `<path d="M3 3v18M21 3v18M3 5h18" stroke="#333"/>${smallbulb('#b8d8f6', 6, 6)}`,
    fx: `<rect x="13" y="2" width="9" height="8" fill="#d8e8f6" stroke="#1c75bc"/><rect x="2" y="13" width="8" height="8" fill="#eee" stroke="#333"/><path d="M13 10H7v3" stroke="#1c75bc"/><path d="M13 14l8 8M21 14l-8 8" stroke="#d81e1e" stroke-width="3"/>`,
    fkey: `${sheetcheck}<rect x="13" y="11" width="6" height="12" rx="3" fill="#fff" stroke="#1c5d98" stroke-width="1.300"/>`
  };

  // base class: every element renders its css + html into an open shadow root
  class CadElement extends HTMLElement {
    constructor() {
      super();
      this.attachShadow({ mode: 'open' });
    }
    connectedCallback() {
      this.render();
    }
    num(name, fallback) {
      const v = this.getAttribute(name);
      return v === null ? fallback : Number(v);
    }
    render() {
      this.shadowRoot.innerHTML = `<style>${this.css()}</style>${this.html()}`;
    }
    css() { return ':host{display:block}'; }
    html() { return '<slot></slot>'; }
  }

  class CadIcon extends CadElement {
    css() {
      const box = this.num('box', this.num('size', 22));
      return `:host{display:inline-flex;align-items:center;justify-content:center;flex:none;width:${box}px;height:100%;min-height:${Math.min(box, 20)}px}
        svg{flex:none}`;
    }
    html() {
      const box = this.num('box', 22);
      const size = this.num('size', box === 23 ? 21 : box >= 24 ? 24 : 22);
      return `<svg viewBox="0 0 24 24" width="${size}" height="${size}" fill="none" stroke="#555">${ICONS[this.getAttribute('name')] || ''}</svg>`;
    }
  }

  class CadWallLabel extends CadElement {
    css() {
      return `:host{position:absolute;left:${this.num('x', 0)}px;top:${this.num('y', 0)}px;color:#fff;font:14px/20px "Noto Sans",sans-serif;text-shadow:1px 1px 1px #113}`;
    }
  }

  class CadCaret extends CadElement {
    css() { return ':host{display:block;width:0;height:0;border:3.5px solid transparent;border-top:4px solid #333;border-bottom:0;margin:6px auto 0}'; }
    html() { return ''; }
  }

  class CadGrid extends CadElement {
    css() {
      return `:host{display:grid;grid-template-columns:${this.getAttribute('cols')};grid-template-rows:${this.getAttribute('rows')};gap:${this.getAttribute('gap') || 0};margin-top:${this.num('mt', 0)}px;flex:none;align-content:start}`;
    }
  }

  class CadRow extends CadElement {
    css() {
      const h = this.getAttribute('h');
      return `:host{display:flex;gap:${this.num('gap', 0)}px;flex:none;${h ? `height:${h}px` : ''}}`;
    }
  }

  class CadDesktop extends CadElement {
    css() {
      return `:host{display:flex;flex-direction:column;width:1419px;height:1002px;position:absolute;left:11px;top:3px;background:#686868;overflow:hidden}
        .logo{position:absolute;left:0;top:13px;width:41px;height:40px;box-sizing:border-box;border:1px solid #333;background:linear-gradient(135deg,#6e6e6e,#a8a8a8 60%,#c4c4c4);z-index:3;font:bold 9px "Noto Sans",sans-serif;color:#222}
        .logo svg{position:absolute;left:1px;top:1px}
        .logo span{position:absolute;right:2px;bottom:0}
        .logo i{position:absolute;right:3px;top:18px;border:4px solid transparent;border-top:4px solid #333;border-bottom:0}`;
    }
    html() {
      return `<div class="logo">
        <svg width="34" height="36" viewBox="0 0 34 36"><path d="M22 4C14 3 5 7 5 14c0 6 3 12 5 17l7-4 1-7c4 3 10 4 15 1-7 1-17-1-19-6-1-5 3-9 8-11z" fill="#d8232a"/><path d="M10 31l7-4 1-7c-4 1-7 5-8 11z" fill="#7a1014"/></svg>
        <i></i><span>3D</span></div><slot></slot>`;
    }
  }

  class CadTitlebar extends CadElement {
    css() {
      return `:host{display:flex;align-items:center;gap:23px;height:37px;padding:0 0 1px 736px;box-sizing:border-box;background:#fff;color:#333;font:15.8px "Noto Sans",sans-serif;flex:none}`;
    }
  }

  class CadTabs extends CadElement {
    css() {
      return `:host{display:flex;align-items:flex-end;height:24px;padding-left:57px;background:#424242;flex:none;position:relative}
        .min{display:flex;align-items:center;margin-left:29px;height:22px;gap:7px;align-self:flex-start}
        .pill{width:17px;height:9px;border-radius:2px;background:#e8e8e8;display:flex;align-items:center;justify-content:center}
        .pill i{border:3px solid transparent;border-bottom:4px solid #444;border-top:0}
        .arr{border:3px solid transparent;border-top:3px solid #ddd;border-bottom:0}`;
    }
    html() { return `<slot></slot><div class="min"><div class="pill"><i></i></div><div class="arr"></div></div>`; }
  }

  class CadTab extends CadElement {
    css() {
      const on = this.hasAttribute('active');
      return `:host{display:flex;align-items:center;box-sizing:border-box;height:${on ? 21 : 24}px;padding:0 12px 2px;color:${on ? '#333' : '#eee'};
        ${on ? 'background:linear-gradient(#fff,#f0f0f0);border:1px solid #bbb;border-bottom:0;border-radius:2px 2px 0 0;padding:0 10px 3px;margin-right:1px;' : ''}}`;
    }
  }

  class CadRibbon extends CadElement {
    css() {
      return `:host{display:flex;height:123px;padding-left:2px;flex:none;box-sizing:border-box;position:relative;background:#fff}
        :host::after{content:"";flex:1;background:linear-gradient(#b8b8b8,#8c8c8c);margin-top:2px}`;
    }
    html() { return '<slot></slot>'; }
  }

  class CadPanel extends CadElement {
    css() {
      const col = this.hasAttribute('column');
      return `:host{display:flex;flex-direction:column;flex:none;box-sizing:border-box;width:${this.num('w', 100)}px;height:123px;position:relative;background:#fff}
        :host::after{content:"";position:absolute;right:0;top:2px;bottom:0;width:1px;background:#c4c4c4}
        .body{height:101px;box-sizing:border-box;display:flex;flex-direction:${col ? 'column' : 'row'};padding:${this.getAttribute('pad') || 0}}
        .title{height:21px;margin-right:2px;padding-top:1px;box-sizing:border-box;background:#eee;border-bottom:1px solid #ccc;display:flex;align-items:center;justify-content:center;gap:9px;color:#333;font-size:15px;line-height:20px}
        .title i{border:4px solid transparent;border-top:5px solid #333;border-bottom:0;margin-top:2px}`;
    }
    html() {
      return `<div class="body"><slot></slot></div><div class="title">${this.getAttribute('label')}${this.hasAttribute('arrow') ? '<i></i>' : ''}</div>`;
    }
  }

  class CadTool extends CadElement {
    css() {
      const on = this.hasAttribute('active');
      return `:host{display:flex;box-sizing:border-box;flex:none;width:${this.num('w', 29)}px;height:${this.num('h', 27)}px;margin-left:${this.num('ml', 0)}px;
        background:${on ? '#b7d6f3' : 'linear-gradient(#fafafa,#f0f0f0)'};border:${on ? '2px solid #1a6fc4' : '1px solid #dadada'};border-radius:1px}
        .main{flex:1;display:flex;align-items:center;justify-content:center;min-width:0}
        .drop{display:flex;align-items:center;justify-content:center}
        .drop.split{width:14px;border-left:1px solid #dadada}
        .drop.inline{width:13px}
        .drop i{border:3px solid transparent;border-top:4px solid #333;border-bottom:0}`;
    }
    html() {
      const d = this.getAttribute('drop');
      return `<div class="main"><cad-icon name="${this.getAttribute('icon')}" size="${this.hasAttribute('active') ? 23 : 24}" box="24"></cad-icon></div>${d ? `<div class="drop ${d}"><i></i></div>` : ''}`;
    }
  }

  class CadBigtool extends CadElement {
    css() {
      const on = this.hasAttribute('active');
      return `:host{display:flex;flex-direction:column;align-items:center;flex:none;box-sizing:border-box;text-align:center;line-height:20px;color:#333;
        ${on ? 'background:#b7d6f3;border:1px solid #1a6fc4;width:67px;height:90px;' : ''}}
        .ico{display:flex;height:${on ? 46 : 47}px;align-items:center}`;
    }
    html() {
      const s = this.num('size', 42);
      return `<div class="ico"><cad-icon name="${this.getAttribute('icon')}" size="${s}" box="${s}"></cad-icon></div><div><slot></slot></div>`;
    }
  }

  class CadAction extends CadElement {
    css() {
      return `:host{display:flex;align-items:center;gap:6px;color:#333;white-space:nowrap}
        i{border:3px solid transparent;border-top:4px solid #333;border-bottom:0;margin-left:3px}`;
    }
    html() {
      return `<cad-icon name="${this.getAttribute('icon')}" size="24" box="22"></cad-icon><slot></slot>${this.hasAttribute('arrow') ? '<i></i>' : ''}`;
    }
  }

  class CadCombo extends CadElement {
    css() {
      const ribbon = this.getAttribute('mode') === 'ribbon';
      const mono = this.hasAttribute('mono');
      const off = this.hasAttribute('disabled');
      return `:host{display:flex;align-items:center;flex:none;box-sizing:border-box;position:relative;width:${this.num('w', 100)}px;height:${this.num('h', 22)}px;margin-top:${this.num('mt', 0)}px;
        background:${ribbon ? '#f6f6f6' : off ? '#c8c8c8' : '#e2e2e2'};${ribbon ? 'border:1px solid #d4d4d4;' : 'border-right:1px solid #bbb;'}
        color:${off ? '#888' : '#222'};${ribbon || mono ? '' : 'padding-bottom:1px;font-size:15.3px;'}${mono ? 'font:13.4px "Liberation Mono",monospace;' : ''}${this.hasAttribute('center') ? 'justify-content:center;padding-right:11px;' : ''}}
        svg{position:absolute;right:7px;top:50%;transform:translateY(-50%)}`;
    }
    html() {
      const ribbon = this.getAttribute('mode') === 'ribbon';
      return `<slot></slot>` + (ribbon
        ? `<svg width="11" height="6" viewBox="0 0 11 6"><path d="M0 0h11L5.500 6z" fill="#333"/></svg>`
        : `<svg width="11" height="7" viewBox="0 0 11 7" fill="none" stroke="${this.hasAttribute('disabled') ? '#aaa' : '#666'}"><path d="M.5 1l5 5 5-5"/></svg>`);
    }
  }

  class CadSwatch extends CadElement {
    css() {
      const s = this.num('size', 10);
      return `:host{display:block;flex:none;box-sizing:border-box;width:${s}px;height:${s}px;background:#fff;border:1px solid #111}`;
    }
    html() { return ''; }
  }

  class CadRule extends CadElement {
    css() { return `:host{display:block;flex:none;width:${this.num('w', 60)}px;height:1px;background:#111;margin-left:4px}`; }
    html() { return ''; }
  }

  class CadToolbars extends CadElement {
    css() {
      return `:host{display:flex;flex-direction:column;gap:3px;flex:none;height:61px;box-sizing:border-box;padding:5px 0 0 1px;background:#686868;border-top:1px solid #ccc}`;
    }
    html() {
      return `<slot></slot><cad-float></cad-float>`;
    }
  }

  class CadToolbar extends CadElement {
    css() {
      return `:host{display:flex;box-sizing:border-box;flex:none;width:${this.num('w', 100)}px;height:24px;background:#f2f2f2;border:1px solid #333;overflow:hidden}
        .grip{width:7px;flex:none;background:radial-gradient(circle,#111 .8px,transparent 1px) 1px 0/3px 3px,#666}`;
    }
    html() { return `<div class="grip"></div><slot></slot>`; }
  }

  class CadSep extends CadElement {
    css() {
      const grip = this.hasAttribute('grip');
      const w = this.num('w', grip ? 8 : 6);
      return `:host{display:flex;justify-content:center;flex:none;width:${w}px;${grip ? 'background:#666' : ''}}
        i{width:${grip ? 3 : 1}px;background:${grip ? 'radial-gradient(circle,#111 .8px,transparent 1px) 0 0/3px 3px' : '#999'};margin:2px 0;display:block}`;
    }
    html() { return '<i></i>'; }
  }

  class CadFloat extends CadElement {
    css() {
      return `:host{position:absolute;left:189px;top:197px;display:flex;box-sizing:border-box;width:312px;height:24px;background:#f0f0f0;border:1px solid #333;z-index:2}
        .grip{width:7px;flex:none;background:radial-gradient(circle,#111 .8px,transparent 1px) 1px 0/3px 3px,#666}
        .close{position:absolute;right:0;top:0;bottom:0;width:11px;background:#555;color:#fff;font:bold 10px/12px "Noto Sans",sans-serif;text-align:center}
        .fx{width:24px;text-align:center;font:italic 15px/22px "Liberation Serif",serif;color:#222}`;
    }
    html() {
      const ic = (n, b = 24) => `<cad-icon name="${n}" box="${b}" size="21"></cad-icon>`;
      return `<div class="grip"></div>${ic('fdim', 20)}${ic('fzap')}${ic('fbulbA')}${ic('fbulbB')}${ic('fbulbC')}<cad-sep></cad-sep>${ic('flock')}${ic('fdimA')}${ic('fdimB')}${ic('fdimC', 22)}<cad-sep w="3"></cad-sep>${ic('fx')}${ic('fkey')}<div class="fx">fx</div><div class="close">x</div>`;
    }
  }

  class CadWorkspace extends CadElement {
    css() {
      return `:host{display:flex;height:750px;flex:none;background:#696969;border-top:1px solid #555;box-sizing:border-box}
        .left{display:flex;width:247px;flex:none}
        .right{flex:1;display:flex;flex-direction:column;min-width:0}
        .top{display:flex;height:691px;gap:5px;flex:none}`;
    }
    html() {
      return `<div class="left"><slot name="palette"></slot></div>
        <div class="right"><div class="top"><slot name="drawbar"></slot><slot name="viewport"></slot></div><slot name="command"></slot></div>`;
    }
  }

  class CadPalette extends CadElement {
    css() {
      return `:host{display:flex;flex-direction:column;width:215px;flex:none;height:746px;margin-top:1px;box-sizing:border-box;background:#eee;border-radius:6px 6px 0 0;overflow:hidden}
        .head{height:25px;flex:none;display:flex;align-items:center;padding-left:13px;background:linear-gradient(#aaa,#999);color:#222;position:relative}
        .head::before{content:"";position:absolute;left:4px;top:3px;width:3px;height:12px;background:radial-gradient(circle,#222 .8px,transparent 1px) 0 0/3px 3px}
        .tools{height:33px;flex:none;display:flex;align-items:center;justify-content:flex-end;background:#f0f0f0;position:relative}
        .q{width:14px;height:18px;box-sizing:border-box;border:1px solid #444;background:#fff;font:bold 13px/16px "Noto Sans",sans-serif;text-align:center;overflow:hidden;color:#333;margin-right:-2px}
        .view{height:25px;box-sizing:border-box;flex:none;display:flex;align-items:center;padding:0 0 3px 4px;background:#e2e2e2;border:1px solid #aaa;border-width:1px 0;color:#222}
        .tree{height:561px;flex:none;box-sizing:border-box;background:#fff;border:1px solid #999;border-width:1px 0 1px 1px;padding-top:1px;overflow:hidden}
        .strip{height:7px;flex:none;background:#eee}
        .foot{height:94px;flex:none;background:#efefef;border:1px solid #999;box-sizing:border-box}`;
    }
    html() {
      return `<div class="head">工具空间</div>
        <div class="tools"><cad-icon name="palTree" box="18" size="18" style="margin-right:18px"></cad-icon><cad-icon name="palList" box="18" size="18" style="margin-right:20px"></cad-icon><div class="q">?</div></div>
        <div class="view">当前图形视图</div>
        <div class="tree"><slot></slot></div><div class="strip"></div><div class="foot"></div>`;
    }
  }

  class CadTreeItem extends CadElement {
    css() {
      const lvl = this.num('level', 0);
      const first = this.hasAttribute('bold');
      const dot = (dir) => `repeating-linear-gradient(${dir},#666 0 1px,transparent 1px 2px)`;
      return `:host{display:flex;align-items:center;position:relative;height:${first ? 25 : 24}px;color:#000;white-space:nowrap;padding-left:${lvl ? 43 : 24}px;box-sizing:border-box;${first ? 'font-weight:bold;font-size:15.5px;' : ''}}
        .box{position:absolute;left:${lvl ? 27 : 8}px;top:50%;margin-top:-6px;width:11px;height:11px;box-sizing:border-box;border:1px solid #999;background:linear-gradient(#fff,#d8d8d8);z-index:1}
        .box::before,.box.plus::after{content:"";position:absolute;background:#1c3f8a}
        .box::before{left:1px;right:1px;top:4px;height:1px}
        .box.plus::after{top:1px;bottom:1px;left:4px;width:1px}
        .v{position:absolute;width:1px;background:${dot('180deg')}}
        .h{position:absolute;height:1px;background:${dot('90deg')};top:50%}
        .label{margin-left:6px}`;
    }
    html() {
      const lvl = this.num('level', 0);
      const plus = this.hasAttribute('plus');
      const open = this.hasAttribute('open');
      let lines = '';
      if (lvl) {
        lines += `<div class="v" style="left:32px;top:0;${this.hasAttribute('last') ? 'height:50%' : 'bottom:0'}"></div><div class="h" style="left:32px;width:10px"></div>`;
        if (this.hasAttribute('trunk')) lines += `<div class="v" style="left:13px;top:0;bottom:0"></div>`;
      } else {
        lines += `<div class="h" style="left:14px;width:10px"></div>`;
        if (this.hasAttribute('bold')) lines += `<div class="v" style="left:13px;top:50%;bottom:0"></div>`;
      }
      const box = (plus || open) ? `<div class="box ${plus ? 'plus' : ''}"></div>` : '';
      return `${lines}${box}<cad-icon name="${this.getAttribute('icon')}" box="18" size="20"></cad-icon><span class="label"><slot></slot></span>`;
    }
  }

  class CadSidetabs extends CadElement {
    css() { return `:host{display:flex;flex-direction:column;width:26px;flex:none;padding-top:29px}`; }
  }

  class CadSidetab extends CadElement {
    css() {
      const on = this.hasAttribute('active');
      return `:host{display:flex;align-items:center;justify-content:center;box-sizing:border-box;height:149px;flex:none;background:${on ? '#f0f0f0' : '#cbcbcb'};border-right:1px solid #666;border-bottom:1px solid #666;${on ? 'border-radius:0 3px 0 0;' : ''}${this.hasAttribute('last') ? 'border-radius:0 0 3px 0;' : ''}color:#111;font-size:15px}
        span{writing-mode:vertical-rl;text-orientation:sideways;transform:rotate(180deg)}`;
    }
    html() { return '<span><slot></slot></span>'; }
  }

  class CadDrawbar extends CadElement {
    css() {
      return `:host{display:flex;flex-direction:column;flex:none;width:24px;height:447px;box-sizing:border-box;background:#f0f0f0;border:1px solid #333;padding-top:7px;position:relative}
        :host::before{content:"";position:absolute;left:3px;right:3px;top:2px;height:5px;background:radial-gradient(circle,#222 .8px,transparent 1px) 0 0/3px 3px}
        ::slotted(*){height:22px !important;flex:none}`;
    }
  }

  class CadTextIcon extends CadElement {
    css() { return `:host{display:flex;justify-content:center;align-items:center;height:22px;font:20px "Noto Sans",sans-serif;color:#333}`; }
  }

  class CadViewport extends CadElement {
    css() {
      return `:host{display:block;flex:1;height:686px;box-sizing:border-box;background:#212830;border-left:2px solid #b8b8b8;border-top:1px solid #888;border-bottom:2px solid #e8e8e8;position:relative;overflow:hidden;color:#ddd}
        .label{position:absolute;left:4px;top:4px;font-size:12.5px;line-height:16px;color:#e0e0e0;white-space:pre}
        svg{position:absolute;left:0;top:0}`;
    }
    html() {
      return `<div class="label">${this.getAttribute('label')}</div>
        <svg width="400" height="685" fill="none" stroke="#fff" shape-rendering="crispEdges" style="left:1px">
          <path d="M82 180.500h77M120.500 142v77"/>
          <rect x="118.500" y="178.500" width="4" height="4"/>
          <path d="M17.500 618v47M17.500 666h50" />
          <rect x="12.500" y="660.500" width="9" height="9"/>
          <g shape-rendering="auto"><path d="M19 599l5 5 5-6M24 604v7"/><path d="M71 652l12 12M83 652L71 664"/></g>
        </svg><slot></slot>`;
    }
  }

  class CadWatermark extends CadElement {
    css() {
      return `:host{position:absolute;left:${this.num('x', 0)}px;top:${this.num('y', 0)}px;font-size:24.4px;line-height:28px;color:#4c535a;white-space:nowrap;transform-origin:0 100%;transform:rotate(-36deg)}`;
    }
  }

  class CadCommand extends CadElement {
    css() {
      return `:host{display:flex;height:58px;box-sizing:border-box}
        .grip{width:16px;flex:none;background:#a0a0a0;border-radius:4px 0 0 0;position:relative}
        .grip::before{content:"";position:absolute;left:2px;right:2px;top:3px;height:5px;background:radial-gradient(circle,#222 .8px,transparent 1px) 0 0/3px 3px}
        .main{flex:1;border-left:1px solid #fff;display:flex;flex-direction:column;font-size:15.5px;letter-spacing:1px;color:#111;min-height:0}
        .hist{height:36px;flex:none;background:#c8c8c8;border-bottom:1px solid #aaa;padding-left:1px;line-height:20px}
        .input{height:21px;flex:none;box-sizing:border-box;background:#fff;padding:1px 0 0 1px;line-height:20px}
        b{margin-left:3px}`;
    }
    html() {
      return `<div class="grip"></div><div class="main"><div class="hist">命令<b>:</b></div><div class="input">命令<b>:</b></div></div>`;
    }
  }

  class CadStatusbar extends CadElement {
    css() {
      return `:host{display:flex;height:7px;flex:none;box-sizing:border-box;background:#808080;border-top:1px solid #111;overflow:hidden}
        .l{width:324px;background:#999}
        .c{width:22px;box-sizing:border-box;background:#c4c4c4;border-left:1px solid #555;position:relative}
        .b{background:linear-gradient(#cfe9f6,#e8f4fa)}
        .c i{position:absolute;left:9px;top:1px;width:1px;height:5px;background:#222}
        .r{flex:1;background:#808080;border-left:1px solid #555}`;
    }
    html() {
      const cells = ['i', '', 'i', 'i', 'b', 'i', 'i', 'b', 'i', 'b', 'i', 'b', '', 'i'];
      return `<div class="l"></div>${cells.map(c => `<div class="c ${c === 'b' ? 'b' : ''}">${c === 'i' ? '<i></i>' : ''}</div>`).join('')}<div class="r"></div>`;
    }
  }

  customElements.define('cad-icon', CadIcon);
  customElements.define('cad-wall-label', CadWallLabel);
  customElements.define('cad-caret', CadCaret);
  customElements.define('cad-grid', CadGrid);
  customElements.define('cad-row', CadRow);
  customElements.define('cad-swatch', CadSwatch);
  customElements.define('cad-rule', CadRule);
  customElements.define('cad-sep', CadSep);
  customElements.define('cad-float', CadFloat);
  customElements.define('cad-desktop', CadDesktop);
  customElements.define('cad-titlebar', CadTitlebar);
  customElements.define('cad-tabs', CadTabs);
  customElements.define('cad-tab', CadTab);
  customElements.define('cad-ribbon', CadRibbon);
  customElements.define('cad-panel', CadPanel);
  customElements.define('cad-tool', CadTool);
  customElements.define('cad-bigtool', CadBigtool);
  customElements.define('cad-action', CadAction);
  customElements.define('cad-combo', CadCombo);
  customElements.define('cad-toolbars', CadToolbars);
  customElements.define('cad-toolbar', CadToolbar);
  customElements.define('cad-workspace', CadWorkspace);
  customElements.define('cad-palette', CadPalette);
  customElements.define('cad-tree-item', CadTreeItem);
  customElements.define('cad-sidetabs', CadSidetabs);
  customElements.define('cad-sidetab', CadSidetab);
  customElements.define('cad-drawbar', CadDrawbar);
  customElements.define('cad-text-icon', CadTextIcon);
  customElements.define('cad-viewport', CadViewport);
  customElements.define('cad-watermark', CadWatermark);
  customElements.define('cad-command', CadCommand);
  customElements.define('cad-statusbar', CadStatusbar);
</script>
</body>
</html>
